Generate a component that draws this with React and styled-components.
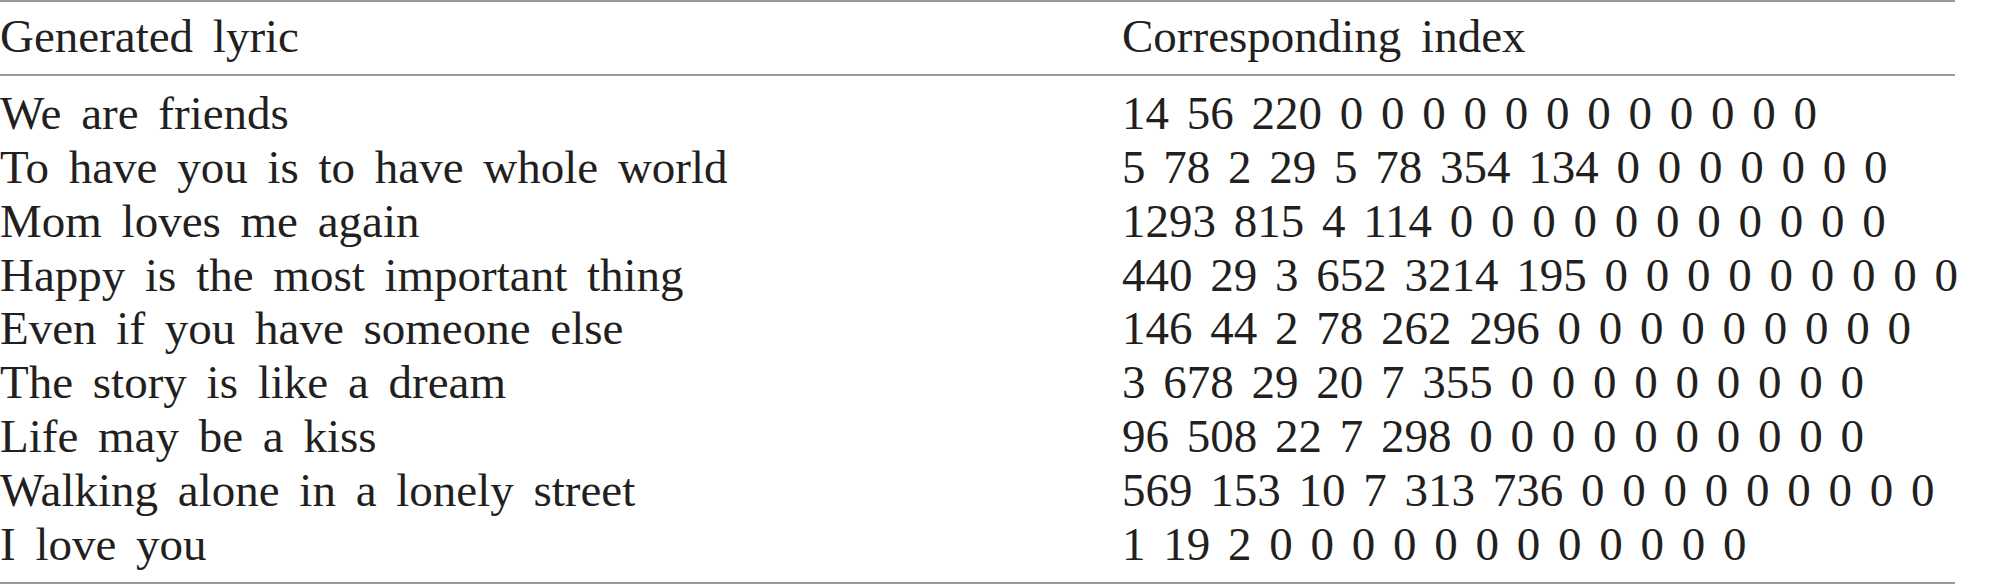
import styled, { createGlobalStyle } from "styled-components";

const GlobalStyle = createGlobalStyle`
  body {
    margin: 0;
    background: #ffffff;
  }
`;

const Table = styled.div`
  width: 1955px;
  font-family: "Liberation Serif", "Times New Roman", serif;
  font-size: 47px;
  line-height: 54px;
  color: #231f20;
  border-top: 2px solid #9a9a9a;
  border-bottom: 2px solid #9a9a9a;
`;

const Row = styled.div`
  display: grid;
  grid-template-columns: 1122px 1fr;
  height: 53.9px;
`;

const HeadRow = styled(Row)`
  padding: 7px 0 11px;
  border-bottom: 2px solid #9a9a9a;
`;

const Body = styled.div`
  padding: 10px 0 11px;
`;

const Cell = styled.div`
  white-space: nowrap;
  word-spacing: ${(p) => (p.$numeric ? "6px" : "8px")};
`;

const rows = [
  { lyric: "We are friends", index: "14 56 220 0 0 0 0 0 0 0 0 0 0 0 0" },
  { lyric: "To have you is to have whole world", index: "5 78 2 29 5 78 354 134 0 0 0 0 0 0 0" },
  { lyric: "Mom loves me again", index: "1293 815 4 114 0 0 0 0 0 0 0 0 0 0 0" },
  { lyric: "Happy is the most important thing", index: "440 29 3 652 3214 195 0 0 0 0 0 0 0 0 0" },
  { lyric: "Even if you have someone else", index: "146 44 2 78 262 296 0 0 0 0 0 0 0 0 0" },
  { lyric: "The story is like a dream", index: "3 678 29 20 7 355 0 0 0 0 0 0 0 0 0" },
  { lyric: "Life may be a kiss", index: "96 508 22 7 298 0 0 0 0 0 0 0 0 0 0" },
  { lyric: "Walking alone in a lonely street", index: "569 153 10 7 313 736 0 0 0 0 0 0 0 0 0" },
  { lyric: "I love you", index: "1 19 2 0 0 0 0 0 0 0 0 0 0 0 0" },
];

const App = () => {
  return (
    <>
      <GlobalStyle />
      <Table>
        <HeadRow>
          <Cell>Generated lyric</Cell>
          <Cell>Corresponding index</Cell>
        </HeadRow>
        <Body>
          {rows.map((row) => (
            <Row key={row.lyric}>
              <Cell>{row.lyric}</Cell>
              <Cell $numeric>{row.index}</Cell>
            </Row>
          ))}
        </Body>
      </Table>
    </>
  );
};

export default App;
